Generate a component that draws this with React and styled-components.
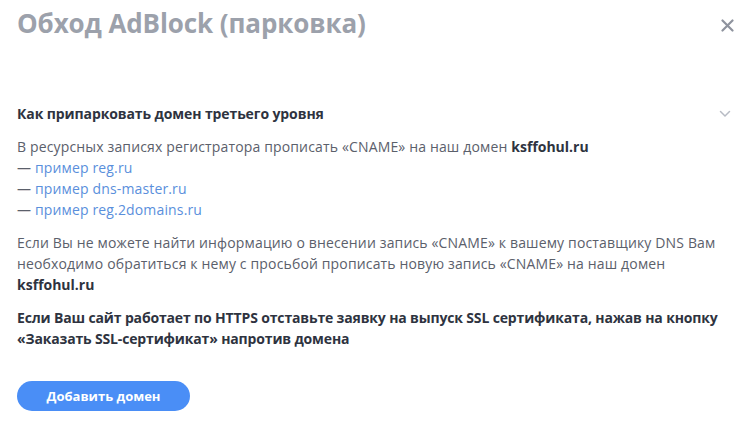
import styled, { createGlobalStyle } from "styled-components";

const GlobalStyle = createGlobalStyle`
  body {
    margin: 0;
    background: #ffffff;
    font-family: "Open Sans", "Liberation Sans", sans-serif;
  }
`;

function App() {
  return (
    <>
      <GlobalStyle />
      <Modal>
        <Header>
          <Title>Обход AdBlock (парковка)</Title>
          <CloseButton aria-label="Закрыть">
            <svg width="13" height="13" viewBox="0 0 13 13">
              <path d="M1.5 1.5 L11.5 11.5 M11.5 1.5 L1.5 11.5" stroke="#8e939e" strokeWidth="2.2" strokeLinecap="round" />
            </svg>
          </CloseButton>
        </Header>

        <Section>
          <SectionHead>
            <SectionTitle>Как припарковать домен третьего уровня</SectionTitle>
            <svg width="12" height="8" viewBox="0 0 12 8">
              <path d="M1.5 1.5 L6 6 L10.5 1.5" fill="none" stroke="#b7bbc4" strokeWidth="1.5" strokeLinecap="round" />
            </svg>
          </SectionHead>

          <Text>
            В ресурсных записях регистратора прописать «CNAME» на наш домен <b>ksffohul.ru</b>
          </Text>
          <Links>
            <li>— <A href="#">пример reg.ru</A></li>
            <li>— <A href="#">пример dns-master.ru</A></li>
            <li>— <A href="#">пример reg.2domains.ru</A></li>
          </Links>

          <Text>
            Если Вы не можете найти информацию о внесении запись «CNAME» к вашему поставщику DNS Вам
            необходимо обратиться к нему с просьбой прописать новую запись «CNAME» на наш домен <b>ksffohul.ru</b>
          </Text>

          <Text $strong>
            Если Ваш сайт работает по HTTPS отставьте заявку на выпуск SSL сертификата, нажав на кнопку
            «Заказать SSL-сертификат» напротив домена
          </Text>
        </Section>

        <Button>Добавить домен</Button>
      </Modal>
    </>
  );
}

const Modal = styled.div`
  display: flex;
  flex-direction: column;
  padding: 6px 16px 0 17px;
`;

const Header = styled.div`
  display: flex;
  align-items: center;
  justify-content: space-between;
  height: 34px;
`;

const Title = styled.h1`
  margin: 0;
  font-size: 26px;
  font-weight: 700;
  color: #9ca1ab;
  letter-spacing: -0.1px;
`;

const CloseButton = styled.button`
  border: none;
  background: none;
  padding: 0;
  margin-top: 4px;
  display: flex;
`;

const Section = styled.div`
  margin-top: 64px;
  display: flex;
  flex-direction: column;
  gap: 12px;
`;

const SectionHead = styled.div`
  display: flex;
  align-items: center;
  justify-content: space-between;
  padding-right: 3px;
  margin-bottom: 1px;
`;

const SectionTitle = styled.h3`
  margin: 0;
  font-size: 14px;
  font-weight: 700;
  color: #2e3340;
  letter-spacing: -0.1px;
`;

const Text = styled.p`
  margin: 0;
  font-size: 14px;
  line-height: 21px;
  color: ${(p) => (p.$strong ? "#2e3340" : "#5b606b")};
  font-weight: ${(p) => (p.$strong ? 700 : 400)};
  letter-spacing: ${(p) => (p.$strong ? "-0.15px" : "0.15px")};

  b {
    color: #2e3340;
    font-weight: 700;
    letter-spacing: 0;
  }
`;

const Links = styled.ul`
  list-style: none;
  margin: -12px 0 0;
  padding: 0;
  font-size: 14px;
  line-height: 21px;
  color: #5b606b;
  letter-spacing: 0.15px;
`;

const A = styled.a`
  color: #5a8fdc;
  text-decoration: none;
`;

const Button = styled.button`
  align-self: flex-start;
  margin-top: 32px;
  width: 173px;
  height: 30px;
  border: none;
  border-radius: 15px;
  background: #4a8ef6;
  color: #ffffff;
  font-family: "Open Sans", "Liberation Sans", sans-serif;
  font-size: 13px;
  font-weight: 700;
`;

export default App;
